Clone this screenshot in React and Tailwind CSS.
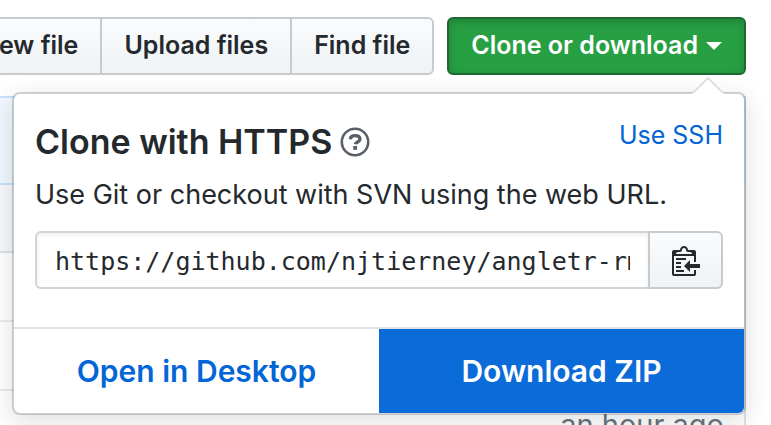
import React from "react";

const grayButton =
  "h-[58px] shrink-0 whitespace-nowrap border-2 border-[#c8cbce] bg-gradient-to-b from-[#fafbfc] to-[#eff3f6] px-[22px] text-[25px] font-semibold text-[#24292e]";

function HelpIcon() {
  return (
    <svg viewBox="0 0 30 30" className="size-[30px]" fill="none" aria-hidden="true">
      <circle cx="15" cy="15" r="13.2" stroke="#586069" strokeWidth="2.6" />
      <path
        d="M10.2 12.2c.3-2.3 2.1-3.6 4.9-3.6 2.9 0 4.8 1.3 4.8 3.5 0 3.2-4.3 2.8-4.6 5.2"
        stroke="#586069"
        strokeWidth="3.4"
      />
      <path d="M13.2 19h3.9v3.8h-3.9z" fill="#586069" />
    </svg>
  );
}

function ClippyIcon() {
  return (
    <svg viewBox="0 0 14 16" className="h-8 w-7" fill="#24292e" aria-hidden="true">
      <path
        fillRule="evenodd"
        d="M2 13h4v1H2v-1zm5-6H2v1h5V7zm2 3V8l-3 3 3 3v-2h5v-2H9zM4.500 9H2v1h2.500V9zM2 12h2.500v-1H2v1zm9 1h1v2c-.020.280-.110.520-.300.700-.190.180-.420.280-.700.300H1c-.550 0-1-.450-1-1V4c0-.550.450-1 1-1h3c0-1.110.890-2 2-2 1.110 0 2 .890 2 2h3c.550 0 1 .450 1 1v5h-1V6H1v9h10v-2zM2 5h8c0-.550-.450-1-1-1H8c-.550 0-1-.450-1-1s-.450-1-1-1-1 .450-1 1-.450 1-1 1H3c-.550 0-1 .450-1 1z"
      />
    </svg>
  );
}

function Toolbar() {
  return (
    <div className="flex justify-end gap-[13px]">
      <div className="flex">
        <button type="button" className={`${grayButton} rounded-l-md`}>
          Create new file
        </button>
        <button type="button" className={`${grayButton} -ml-0.5`}>
          Upload files
        </button>
        <button type="button" className={`${grayButton} -ml-0.5 rounded-r-md`}>
          Find file
        </button>
      </div>
      <button
        type="button"
        className="flex h-[58px] shrink-0 items-center gap-2 whitespace-nowrap rounded-md border-2 border-[#1e6933] bg-[#279f43] px-[22px] text-[25px] font-semibold text-white shadow-[inset_0_3px_8px_rgba(20,70,32,0.3)]"
      >
        Clone or download
        <svg viewBox="0 0 16 8" className="h-2 w-4" fill="currentColor" aria-hidden="true">
          <path d="M0 0h16L8 8z" />
        </svg>
      </button>
    </div>
  );
}

function ClonePopover() {
  return (
    <section className="absolute -top-1 right-0 left-3 rounded-lg border-2 border-[#1b1f23]/20 bg-white bg-clip-padding shadow-[0_6px_24px_rgba(27,31,35,0.15)]">
      <svg
        viewBox="0 0 32 17"
        className="absolute -top-[17px] right-5 h-[17px] w-8"
        fill="none"
        aria-hidden="true"
      >
        <path d="M0 17 16 1 32 17z" fill="#fff" />
        <path d="M1 16 16 1 31 16" stroke="#d6d8da" strokeWidth="1.500" />
      </svg>
      <div className="px-[21px] pt-[22px] pb-[38px] text-[#24292e]">
        <div className="flex items-start justify-between">
          <h1 className="flex items-center gap-2 text-[34px] leading-[52px] font-semibold">
            Clone with HTTPS
            <a href="#help" aria-label="Which remote URL should I use?">
              <HelpIcon />
            </a>
          </h1>
          <a href="#ssh" className="text-[25px] leading-[38px] text-[#0366d6]">
            Use SSH
          </a>
        </div>
        <p className="text-[27px] leading-[54px] whitespace-nowrap">
          Use Git or checkout with SVN using the web URL.
        </p>
        <div className="mt-[9px] flex h-[58px]">
          <input
            type="text"
            readOnly
            aria-label="Clone this repository"
            defaultValue="https://github.com/njtierney/angletr-rmd"
            className="min-w-0 flex-1 rounded-l-md border-2 border-r-0 border-[#d1d5da] bg-white px-[18px] pt-1 font-['DejaVu_Sans_Mono',monospace] text-[25px] shadow-[inset_0_2px_4px_rgba(27,31,35,0.08)] outline-none"
          />
          <button
            type="button"
            aria-label="Copy to clipboard"
            className="flex w-[75px] items-center justify-center rounded-r-md border-2 border-[#c8cbce] bg-gradient-to-b from-[#fafbfc] to-[#eff3f6]"
          >
            <ClippyIcon />
          </button>
        </div>
      </div>
      <div className="grid grid-cols-2 overflow-hidden rounded-b-md border-t-2 border-[#dfe2e5] text-center text-[30px] leading-[84px] font-semibold">
        <a href="#desktop" className="text-[#0366d6]">
          Open in Desktop
        </a>
        <a href="#zip" className="bg-[#0b6bd8] text-white">
          Download ZIP
        </a>
      </div>
    </section>
  );
}

export default function App() {
  return (
    <main className="h-screen overflow-hidden bg-white pt-[17px] pr-[25px] font-['Inter',sans-serif]">
      <Toolbar />
      <div className="relative mt-[21px]">
        <div className="border-r-2 border-[#dfe2e5]">
          <div className="-mr-0.5 h-[89px] border-2 border-l-0 border-[#c8e1ff] bg-[#f1f8ff]" />
          <div className="h-[68px] border-b-2 border-[#dfe2e5] bg-[#f6f8fa]" />
          <div className="h-[69px] border-b-2 border-[#eaecef]" />
          <div className="h-[69px] border-b-2 border-[#eaecef]" />
          <div className="pt-4 pr-5 text-right text-[29px] leading-9 text-[#6a737d]">
            an hour ago
          </div>
        </div>
        <ClonePopover />
      </div>
    </main>
  );
}
